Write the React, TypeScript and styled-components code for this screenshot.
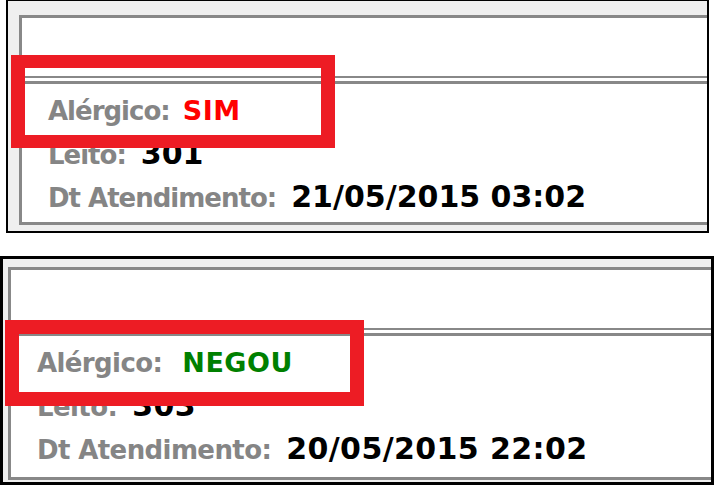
import React from "react";
import styled, { createGlobalStyle } from "styled-components";

const GlobalStyle = createGlobalStyle`
  html, body {
    margin: 0;
    padding: 0;
    background: #ffffff;
  }
  body {
    width: 714px;
    height: 485px;
    overflow: hidden;
    font-family: "DejaVu Sans", Verdana, sans-serif;
  }
  * { box-sizing: border-box; }
`;

const Page = styled.div`
  display: flex;
  flex-direction: column;
  gap: 23px;
  width: 714px;
`;

const Panel = styled.section<{ $ml: number; $width: number; $border: string; $pad: string }>`
  position: relative;
  margin-left: ${(p) => p.$ml}px;
  width: ${(p) => p.$width}px;
  background: #efefef;
  border-style: solid;
  border-color: #000;
  border-width: ${(p) => p.$border};
  padding: ${(p) => p.$pad};
  overflow: hidden;
`;

const Inner = styled.div`
  display: flex;
  flex-direction: column;
  background: #ffffff;
  border-style: solid;
  border-color: #888888;
  border-width: 3px 0 3px 3px;
`;

const HeaderSpace = styled.div`
  height: 58px;
`;

const Divider = styled.div`
  height: 8px;
  border-top: 2px solid #888888;
  border-bottom: 3px solid #888888;
`;

const Rows = styled.div<{ $pb: number }>`
  display: flex;
  flex-direction: column;
  padding: 5px 0 ${(p) => p.$pb}px 26px;
`;

const Row = styled.div`
  height: 43px;
  line-height: 43px;
  white-space: nowrap;
  font-family: "DejaVu Sans", Verdana, sans-serif;
  font-weight: bold;
`;

const Label = styled.span<{ $ls: number }>`
  color: #858585;
  font-size: 26px;
  letter-spacing: ${(p) => p.$ls}px;
`;

const Value = styled.span<{ $ls: number }>`
  color: #000000;
  font-size: 30px;
  margin-left: 15px;
  letter-spacing: ${(p) => p.$ls}px;
`;

const Status = styled.span<{ $color: string; $gap: number }>`
  color: ${(p) => p.$color};
  font-size: 27px;
  margin-left: ${(p) => p.$gap}px;
  letter-spacing: 0.5px;
`;

const Highlight = styled.div<{ $left: number; $top: number; $w: number; $h: number; $bv: number }>`
  position: absolute;
  left: ${(p) => p.$left}px;
  top: ${(p) => p.$top}px;
  width: ${(p) => p.$w}px;
  height: ${(p) => p.$h}px;
  border-style: solid;
  border-color: #ed1c24;
  border-width: ${(p) => p.$bv}px 14px;
  pointer-events: none;
`;

type Record = {
  status: string;
  statusColor: string;
  statusGap: number;
  leito: string;
  atendimento: string;
};

const Card: React.FC<{
  rec: Record;
  ml: number;
  width: number;
  border: string;
  pad: string;
  pb: number;
  labelLs: number;
  valueLs: number;
  hl: { left: number; top: number; w: number; h: number; bv: number };
}> = ({ rec, ml, width, border, pad, pb, labelLs, valueLs, hl }) => (
  <Panel $ml={ml} $width={width} $border={border} $pad={pad}>
    <Inner>
      <HeaderSpace />
      <Divider />
      <Rows $pb={pb}>
        <Row>
          <Label $ls={labelLs}>Alérgico:</Label>
          <Status $color={rec.statusColor} $gap={rec.statusGap}>
            {rec.status}
          </Status>
        </Row>
        <Row>
          <Label $ls={labelLs}>Leito:</Label>
          <Value $ls={valueLs}>{rec.leito}</Value>
        </Row>
        <Row>
          <Label $ls={labelLs}>Dt Atendimento:</Label>
          <Value $ls={valueLs}>{rec.atendimento}</Value>
        </Row>
      </Rows>
    </Inner>
    <Highlight $left={hl.left} $top={hl.top} $w={hl.w} $h={hl.h} $bv={hl.bv} />
  </Panel>
);

export default function App() {
  return (
    <>
      <GlobalStyle />
      <Page>
        <Card
          rec={{
            status: "SIM",
            statusColor: "#ff0000",
            statusGap: 13,
            leito: "301",
            atendimento: "21/05/2015 03:02",
          }}
          ml={6}
          width={703}
          border="1px 2px 2px 2px"
          pad="14px 0 6px 11px"
          pb={4}
          labelLs={-1}
          valueLs={0}
          hl={{ left: 3, top: 54, w: 324, h: 93, bv: 13 }}
        />
        <Card
          rec={{
            status: "NEGOU",
            statusColor: "#008000",
            statusGap: 20,
            leito: "303",
            atendimento: "20/05/2015 22:02",
          }}
          ml={0}
          width={714}
          border="3px"
          pad="8px 0 2px 5px"
          pb={7}
          labelLs={-0.6}
          valueLs={0.4}
          hl={{ left: 2, top: 61, w: 359, h: 86, bv: 14 }}
        />
      </Page>
    </>
  );
}
